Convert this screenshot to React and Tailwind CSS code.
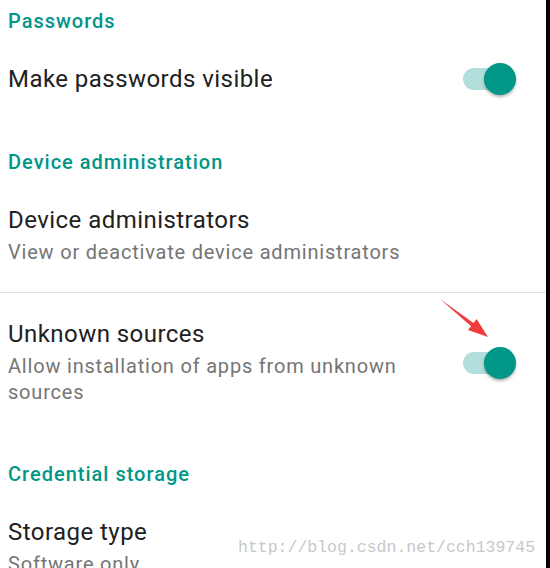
import React from 'react';

const font = { fontFamily: 'Roboto, "Noto Sans", sans-serif' };

function Toggle() {
    return (
        <div className="relative w-[53px] h-[32px] shrink-0">
            <div className="absolute left-0 top-[5px] h-[22px] w-[50px] rounded-full bg-[#b2dfdb]" />
            <div className="absolute right-0 top-0 w-[32px] h-[32px] rounded-full bg-[#009688] shadow-[0_2px_3px_rgba(0,0,0,0.3)]" />
        </div>
    );
}

function Header({ children, className = '' }) {
    return <div className={`shrink-0 pl-2 text-[20px] leading-6 font-medium tracking-[1px] text-[#009688] ${className}`}>{children}</div>;
}

function Title({ children }) {
    return <div className="text-[24px] leading-7 tracking-[0.45px] text-[#212121]">{children}</div>;
}

function Sub({ children }) {
    return <div className="mt-[5px] text-[20px] leading-[26px] tracking-[0.8px] text-[#757575]">{children}</div>;
}

export default function App() {
    return (
        <div className="relative flex w-[550px] h-[568px] overflow-hidden bg-white" style={font}>
            <div className="flex-1 flex flex-col">
                <Header className="pt-[9px]">Passwords</Header>

                <div className="shrink-0 mt-[30px] flex items-center pl-2 pr-[30px]">
                    <div className="flex-1">
                        <Title>Make passwords visible</Title>
                    </div>
                    <Toggle />
                </div>

                <Header className="mt-[55px]">Device administration</Header>

                <div className="shrink-0 mt-[32px] pl-2">
                    <Title>Device administrators</Title>
                    <Sub>View or deactivate device administrators</Sub>
                </div>

                <div className="shrink-0 mt-[27px] h-px bg-[#e0e0e0]" />

                <div className="shrink-0 mt-[27px] flex items-center pl-2 pr-[30px]">
                    <div className="flex-1 pr-[23px]">
                        <Title>Unknown sources</Title>
                        <Sub>Allow installation of apps from unknown sources</Sub>
                    </div>
                    <Toggle />
                </div>

                <Header className="mt-[57px]">Credential storage</Header>

                <div className="shrink-0 mt-[32px] pl-2">
                    <Title>Storage type</Title>
                    <Sub>Software only</Sub>
                </div>
            </div>
            <div className="w-[4px] bg-black" />

            {/* annotation arrow */}
            <svg className="absolute left-0 top-0 pointer-events-none" width="550" height="568">
                <polygon
                    points="440,299 473.5,323 476.6,319.1 488,337 468,330.1 471.1,326.2"
                    fill="#f23c3c"
                />
            </svg>

            {/* watermark */}
            <div
                className="absolute left-[238px] top-[538px] text-[16.5px] leading-5 text-[#c8c8c8]"
                style={{ fontFamily: '"Liberation Mono", monospace' }}
            >
                http://blog.csdn.net/cch139745
            </div>
        </div>
    );
}
